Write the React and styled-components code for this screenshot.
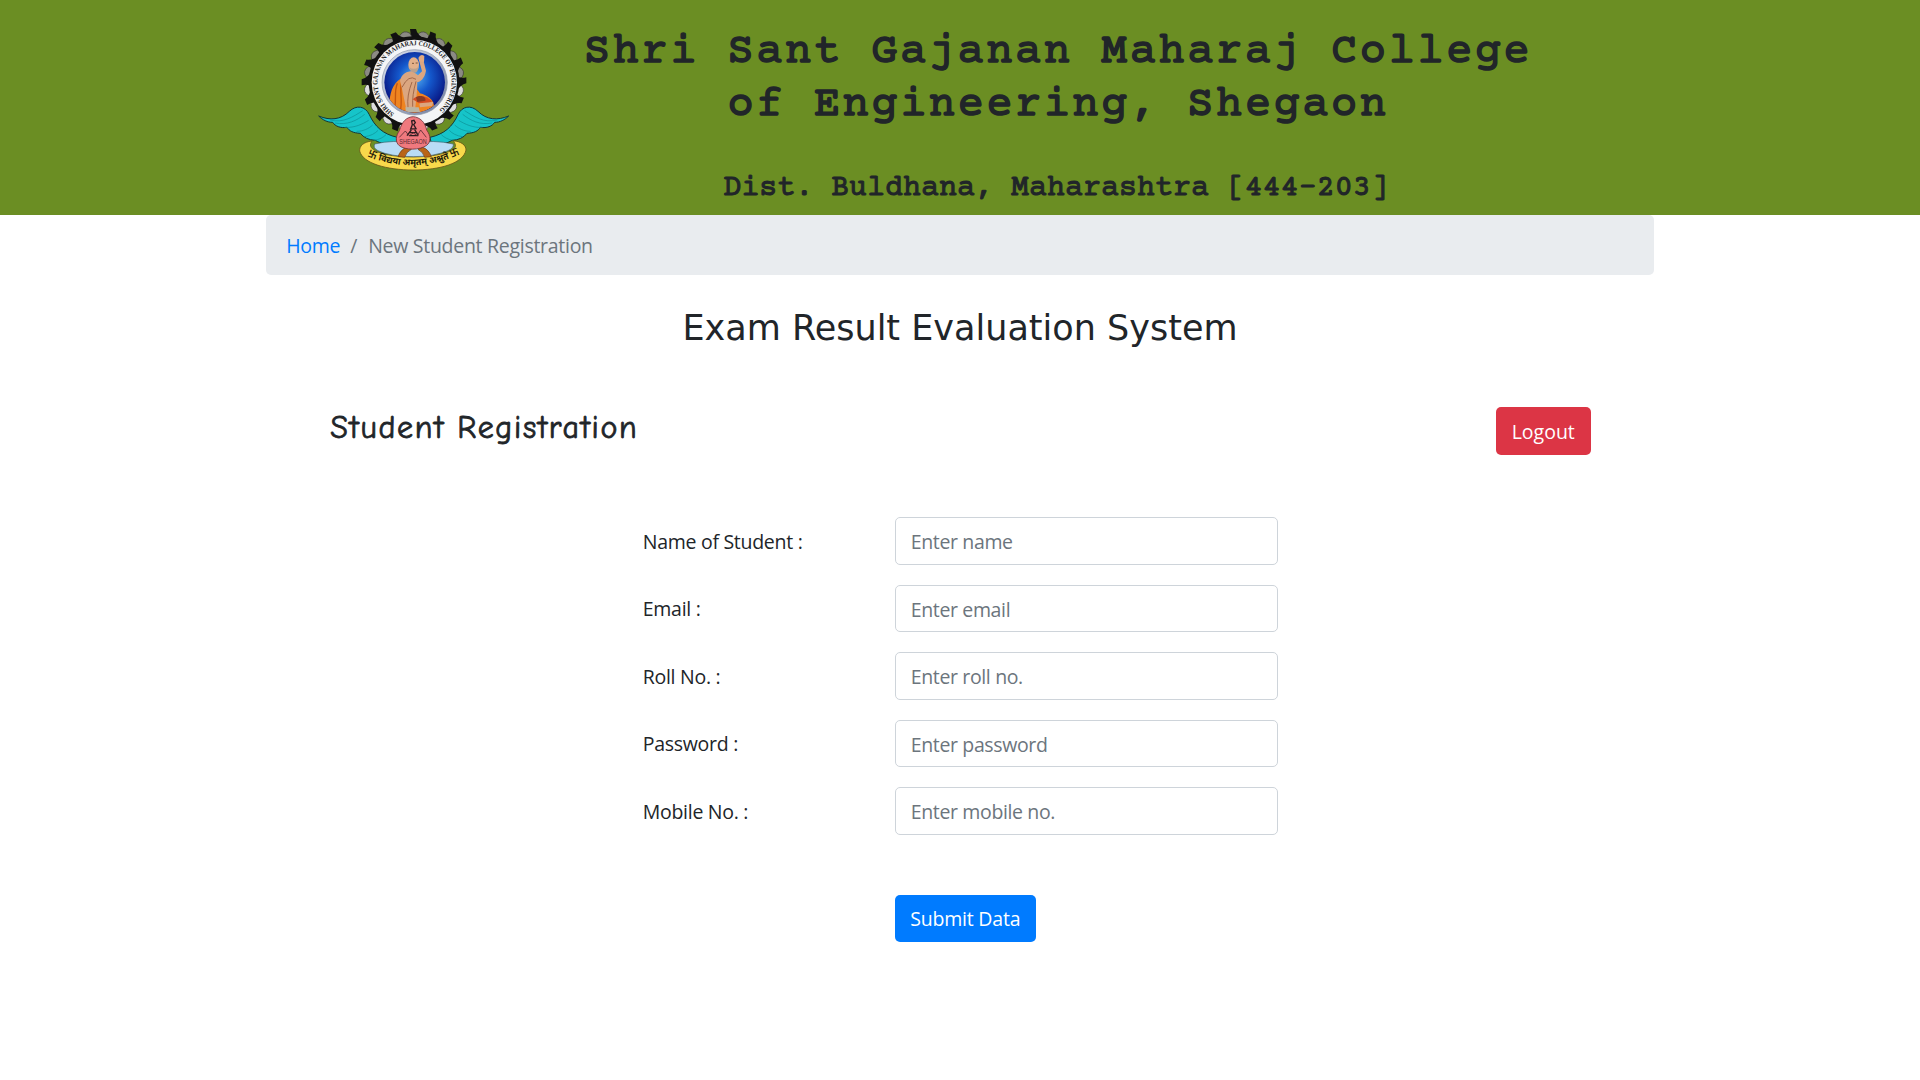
import React from "react";
import styled, { createGlobalStyle } from "styled-components";

const GlobalStyle = createGlobalStyle`
  *, *::before, *::after { box-sizing: border-box; }
  body {
    margin: 0;
    background: #fff;
    color: #212529;
    font-family: "Segoe UI", "Open Sans", "Noto Sans", sans-serif;
    font-size: 19.5px;
    line-height: 30px;
    letter-spacing: -0.28px;
  }
  h1, h2, h3, p, ol { margin: 0; padding: 0; font-weight: 400; letter-spacing: 0; }
`;

const Header = styled.header`
  height: 215px;
  padding: 20px 247px 0 310px;
  display: flex;
  background: #6b8e23;
`;

const Logo = styled.svg`
  display: block;
  flex: none;
  width: 210px;
  height: 160px;
  letter-spacing: 0;
`;

const Titles = styled.div`
  flex: none;
  width: 1000px;
  margin-left: 38px;
  padding-top: 7px;
  text-align: center;
  font-family: "Courier Prime", "Nimbus Mono PS", "FreeMono", "Courier New", "Liberation Mono", monospace;
`;

const CollegeName = styled.h1`
  font-size: 43.75px;
  font-weight: 400;
  line-height: 52.5px;
  letter-spacing: 2.5px;
  -webkit-text-stroke: 1.5px currentColor;
`;

const District = styled.p`
  margin-top: 39px;
  margin-right: 4px;
  font-size: 30px;
  font-weight: 400;
  line-height: 36px;
  -webkit-text-stroke: 1px currentColor;
`;

const Container = styled.main`
  width: 1387.5px;
  margin: 0 auto;
`;

const Breadcrumb = styled.ol`
  display: flex;
  height: 60px;
  padding: 16px 20px 0;
  border-radius: 5px;
  background: #e9ecef;
  color: #6c757d;
  list-style: none;
`;

const Crumb = styled.li`
  letter-spacing: -0.28px;
  & + &::before {
    content: "/";
    padding: 0 11px 0 10px;
  }
`;

const Link = styled.a`
  color: #007bff;
  text-decoration: none;
`;

const SystemTitle = styled.h2`
  margin-top: 32px;
  text-align: center;
  font-family: Verdana, "DejaVu Sans", sans-serif;
  font-size: 35px;
  line-height: 42px;
`;

const SectionBar = styled.section`
  display: flex;
  justify-content: space-between;
  align-items: flex-start;
  margin: 58px 63px 0 64px;
`;

const SectionTitle = styled.h3`
  padding-top: 2px;
  font-family: "Comic Sans MS", "Comic Neue", Lato, sans-serif;
  font-size: 32px;
  line-height: 37px;
  letter-spacing: 1.67px;
  -webkit-text-stroke: 0.8px currentColor;
`;

const Button = styled.button`
  height: 47.5px;
  width: ${(p) => p.$width};
  padding: 2px 0 0;
  border: 0;
  border-radius: 5px;
  background: ${(p) => (p.$danger ? "#dc3545" : "#007bff")};
  color: #fff;
  font: inherit;
  letter-spacing: ${(p) => p.$spacing || "-0.2px"};
`;

const Form = styled.form`
  display: grid;
  gap: 20px;
  width: 636px;
  margin: 62.5px 0 0 376.5px;
`;

const Field = styled.label`
  display: grid;
  grid-template-columns: 252px 383.5px;
  align-items: center;
`;

const Caption = styled.span`
  padding-top: 2px;
`;

const Input = styled.input`
  width: 100%;
  height: 47.5px;
  padding: 2px 15px 0;
  border: 1px solid #ced4da;
  border-radius: 5px;
  font: inherit;
  letter-spacing: -0.36px;
  &::placeholder { color: #6c757d; opacity: 1; }
`;

const Actions = styled.div`
  padding: 40px 0 0 252px;
`;

const fields = [
  ["Name of Student :", "Enter name"],
  ["Email :", "Enter email"],
  ["Roll No. :", "Enter roll no."],
  ["Password :", "Enter password"],
  ["Mobile No. :", "Enter mobile no."],
];

const teeth = Array.from({ length: 16 }, (_, i) => i * 22.5);

function Wing() {
  return (
    <g>
      <path
        d="M26 288 C60 302 92 300 118 274 C139 254 166 258 178 284 C195 320 218 342 262 352 L258 370 C232 376 210 370 196 361 C176 360 161 353 151 340 C129 339 118 333 111 322 C91 325 76 319 68 307 C52 307 38 300 26 288Z"
        fill="#16c4c9" stroke="#12383a" strokeWidth="3"
      />
      <path
        d="M60 300 C100 310 130 290 158 272 M75 309 C112 316 140 302 164 283 M105 322 C134 324 158 312 176 301 M140 334 C160 334 176 326 188 315 M164 350 C182 348 196 340 204 331 M192 361 C208 359 220 352 228 344"
        fill="none" stroke="#0c8f95" strokeWidth="2"
      />
    </g>
  );
}

function CollegeLogo() {
  return (
    <Logo viewBox="0 0 630 480" role="img" aria-label="College emblem">
      <defs>
        <radialGradient id="sky" cx="50%" cy="42%" r="58%">
          <stop offset="0" stopColor="#58b4f2" />
          <stop offset="0.45" stopColor="#1458cc" />
          <stop offset="1" stopColor="#07107c" />
        </radialGradient>
        <linearGradient id="rim" x1="0" y1="0" x2="1" y2="1">
          <stop offset="0" stopColor="#dfe5f2" />
          <stop offset="1" stopColor="#6d7a9a" />
        </linearGradient>
        <clipPath id="portrait"><circle cx="314" cy="187" r="91" /></clipPath>
        <path id="ringText" d="M253 280 A111 111 0 1 1 373 281" />
        <path id="motto" d="M172 408 Q309 466 444 404" />
      </defs>
      {teeth.map((a) => (
        <g key={a} transform={`translate(312 184) rotate(${a})`}>
          <path d="M10 -126 L13 -143 Q30 -156 44 -138 L46 -118Z" fill={a > 80 && a < 250 ? "#dedede" : "#8b8a84"} stroke="#3c3c38" strokeWidth="2" />
          <path d="M-24 -124 Q-6 -132 -12 -157 L6 -157 Q9 -139 36 -124Z" fill="#111" />
        </g>
      ))}
      <circle cx="312" cy="185" r="136" fill="#111" />
      <circle cx="313" cy="187" r="128" fill="#f4f5f7" />
      <circle cx="314" cy="187" r="98" fill="url(#rim)" stroke="#8b95a8" strokeWidth="2" />
      <circle cx="314" cy="187" r="91" fill="url(#sky)" />
      <g clipPath="url(#portrait)">
        <path d="M238 270 C236 228 246 190 272 176 L292 172 L312 196 L330 220 C352 226 372 240 372 258 L340 276 L300 290 L240 290Z" fill="#ef8420" />
        <path d="M262 190 C250 222 262 240 252 274 M276 182 C266 212 280 240 270 276" fill="none" stroke="#c4560e" strokeWidth="4" />
        <path d="M270 182 C276 160 290 154 308 154 L324 166 L336 154 L326 118 L337 108 L348 152 C344 176 330 186 322 186 C322 214 318 240 316 264 L288 264 C284 244 280 226 276 206Z" fill="#dba680" />
        <path d="M276 202 Q296 162 318 178 M306 186 Q290 226 294 262 M318 184 Q306 226 308 260" fill="none" stroke="#a2694a" strokeWidth="3" />
        <ellipse cx="311" cy="134" rx="16" ry="22" fill="#e3b08a" />
        <path d="M298 142 Q312 152 326 140 Q324 158 313 158 Q301 156 298 142Z" fill="#b8a08e" />
        <path d="M306 130 h6 M317 129 h6" stroke="#63402d" strokeWidth="2.5" />
        <path d="M325 114 Q332 100 343 108 L342 126 L329 124Z" fill="#e2aa80" />
        <path d="M308 238 C326 220 352 228 366 244 L340 258Z" fill="#d64b20" />
        <path d="M318 232 C334 222 350 232 346 242 L322 246Z" fill="#8a3a22" />
        <path d="M328 250 L370 246 L366 258 L330 262Z" fill="#dba680" />
        <path d="M286 262 L326 262 L330 276 L288 276Z" fill="#b9b4a4" />
      </g>
      <text fill="#222" fontFamily="'Liberation Serif', serif" fontSize="21" fontWeight="700">
        <textPath href="#ringText" textLength="552" lengthAdjust="spacingAndGlyphs">SHRI SANT GAJANAN MAHARAJ COLLEGE OF ENGINEERING</textPath>
      </text>
      <Wing />
      <g transform="translate(622 0) scale(-1 1)"><Wing /></g>
      <path d="M186 363 C160 366 148 378 149 393 C158 430 230 450 309 450 C390 450 460 430 468 390 C468 375 454 365 430 362 C440 376 438 384 425 391 C380 416 245 418 197 393 C180 384 178 374 186 363Z" fill="#f8d94b" stroke="#665817" strokeWidth="2.5" />
      <path d="M194 372 Q250 358 310 370 Q370 358 430 372 Q432 384 414 392 Q372 410 310 410 Q240 410 204 392 Q188 384 194 372Z" fill="#b9dcf5" stroke="#48606c" strokeWidth="2" />
      <path d="M264 410 Q272 388 290 382 L304 388 Q288 396 284 412Z M364 410 Q356 388 338 382 L324 388 Q340 396 344 412Z" fill="#b96518" stroke="#693609" strokeWidth="2" />
      <path d="M310 290 C330 292 345 306 350 330 C363 348 363 366 350 376 C330 391 285 391 268 377 C255 366 257 348 268 332 C276 304 290 291 310 290Z" fill="#f0797e" stroke="#713238" strokeWidth="2.5" />
      <path d="M305 303 L312 301 L316 308 L311 314 L318 326 L302 327 L307 314Z M291 347 L304 330 M325 347 L314 329 M300 338 h22 M297 347 h28" fill="none" stroke="#2b1d20" strokeWidth="4" />
      <path d="M268 352 L286 333 L297 347 L310 339 L322 347 L332 330 L349 352" fill="none" stroke="#552a30" strokeWidth="2.5" />
      <text x="268" y="372" textLength="82" lengthAdjust="spacingAndGlyphs" fill="#5a2930" fontFamily="'Liberation Sans', sans-serif" fontSize="21">SHEGAON</text>
      <text fill="#1c1808" fontFamily="'Noto Sans Devanagari', 'Noto Sans', 'Noto Sans CJK SC', sans-serif" fontSize="27" fontWeight="700">
        <textPath href="#motto" textLength="286" lengthAdjust="spacingAndGlyphs">卐 विद्यया अमृतम् अश्नुते 卐</textPath>
      </text>
    </Logo>
  );
}

export default function App() {
  return (
    <>
      <GlobalStyle />
      <Header>
        <CollegeLogo />
        <Titles>
          <CollegeName>Shri Sant Gajanan Maharaj College<br />of Engineering, Shegaon</CollegeName>
          <District>Dist. Buldhana, Maharashtra [444-203]</District>
        </Titles>
      </Header>
      <Container>
        <Breadcrumb>
          <Crumb><Link href="#">Home</Link></Crumb>
          <Crumb>New Student Registration</Crumb>
        </Breadcrumb>
        <SystemTitle>Exam Result Evaluation System</SystemTitle>
        <SectionBar>
          <SectionTitle>Student Registration</SectionTitle>
          <Button $danger $width="95px" $spacing="0">Logout</Button>
        </SectionBar>
        <Form>
          {fields.map(([label, hint]) => (
            <Field key={label}>
              <Caption>{label}</Caption>
              <Input placeholder={hint} />
            </Field>
          ))}
          <Actions><Button type="button" $width="141px">Submit Data</Button></Actions>
        </Form>
      </Container>
    </>
  );
}
